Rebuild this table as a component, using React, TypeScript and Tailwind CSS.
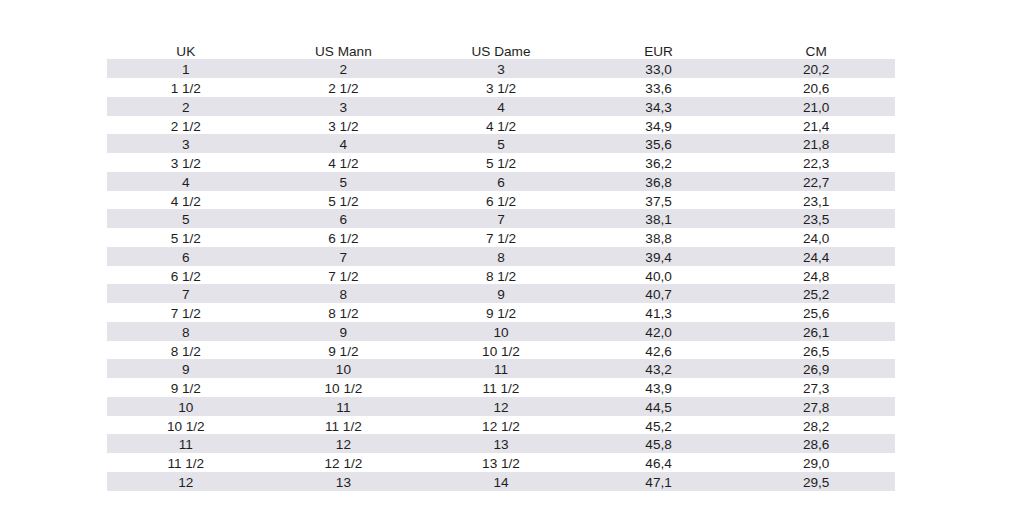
import React from "react";

const rows: string[][] = [
  ["1", "2", "3", "33,0", "20,2"],
  ["1 1/2", "2 1/2", "3 1/2", "33,6", "20,6"],
  ["2", "3", "4", "34,3", "21,0"],
  ["2 1/2", "3 1/2", "4 1/2", "34,9", "21,4"],
  ["3", "4", "5", "35,6", "21,8"],
  ["3 1/2", "4 1/2", "5 1/2", "36,2", "22,3"],
  ["4", "5", "6", "36,8", "22,7"],
  ["4 1/2", "5 1/2", "6 1/2", "37,5", "23,1"],
  ["5", "6", "7", "38,1", "23,5"],
  ["5 1/2", "6 1/2", "7 1/2", "38,8", "24,0"],
  ["6", "7", "8", "39,4", "24,4"],
  ["6 1/2", "7 1/2", "8 1/2", "40,0", "24,8"],
  ["7", "8", "9", "40,7", "25,2"],
  ["7 1/2", "8 1/2", "9 1/2", "41,3", "25,6"],
  ["8", "9", "10", "42,0", "26,1"],
  ["8 1/2", "9 1/2", "10 1/2", "42,6", "26,5"],
  ["9", "10", "11", "43,2", "26,9"],
  ["9 1/2", "10 1/2", "11 1/2", "43,9", "27,3"],
  ["10", "11", "12", "44,5", "27,8"],
  ["10 1/2", "11 1/2", "12 1/2", "45,2", "28,2"],
  ["11", "12", "13", "45,8", "28,6"],
  ["11 1/2", "12 1/2", "13 1/2", "46,4", "29,0"],
  ["12", "13", "14", "47,1", "29,5"],
];

const header = ["UK", "US Mann", "US Dame", "EUR", "CM"];

export default function App() {
  return (
    <div
      className="w-[1024px] h-[512px] bg-white pt-[40.5px] pl-[107px] text-[#1e1e1e] text-[13.6px]"
      style={{ fontFamily: '"Liberation Sans", Arial, sans-serif' }}
    >
      <div className="w-[788px] flex flex-col">
        <div className="grid grid-cols-5 h-[18.75px] items-start pt-[4.5px] leading-none">
          {header.map((h) => (
            <div key={h} className="text-center">{h}</div>
          ))}
        </div>
        {rows.map((r, i) => (
          <div
            key={i}
            className={`grid grid-cols-5 h-[18.75px] items-start pt-[4px] leading-none ${i % 2 === 0 ? "bg-[#e3e3e9]" : "bg-white"}`}
          >
            {r.map((c, j) => (
              <div key={j} className="text-center">{c}</div>
            ))}
          </div>
        ))}
      </div>
    </div>
  );
}
